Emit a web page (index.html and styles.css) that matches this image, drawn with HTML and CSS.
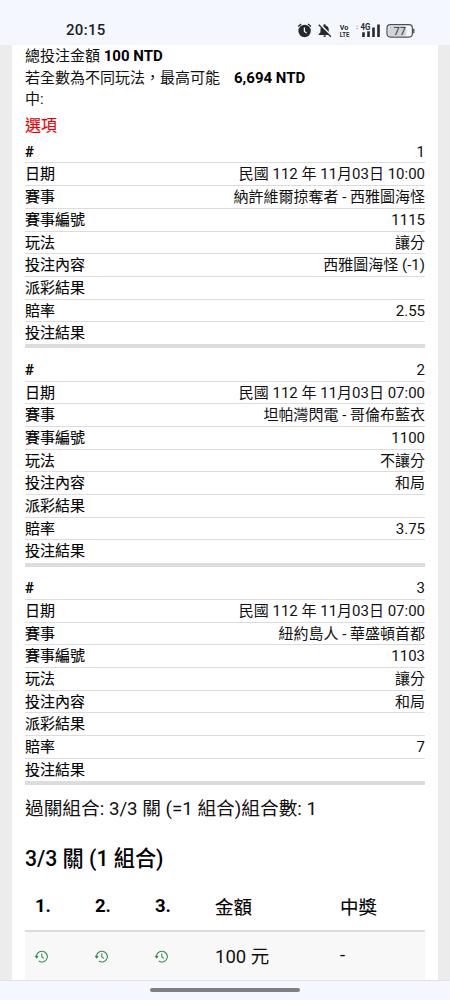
FILE: index.html
```html
<!DOCTYPE html>
<html lang="zh-Hant">
<head>
  <meta charset="UTF-8" />
  <meta name="viewport" content="width=device-width, initial-scale=1.0"/>
  <title>投注明細</title>
  <link rel="stylesheet" href="styles.css">
</head>
<body>
  <header class="status-bar">
    <span class="time">20:15</span>
    <svg class="status-icons" width="120" height="20" viewBox="0 0 120 20">
      <!-- alarm -->
      <circle cx="8.600" cy="11" r="6.200" fill="#262a2f"/>
      <path d="M2.200 6.600L5.200 4.100M15 6.600L12 4.100" stroke="#262a2f" stroke-width="1.300"/>
      <path d="M8.400 7.600V11.400L10.600 13" fill="none" stroke="#f4f8fe" stroke-width="1.200"/>
      <!-- muted bell -->
      <path d="M22.800 14.900V13.900L24.500 12.300V9Q24.700 6.200 27.700 5.500V4.200H29.500V5.500Q32.500 6.200 32.700 9V12.300L34.500 13.900V14.900ZM27.200 15.500H30.100Q29.700 17 28.600 17T27.200 15.500Z" fill="#262a2f"/>
      <path d="M23.500 4L35.700 16.200" stroke="#f4f8fe" stroke-width="2"/>
      <path d="M22.700 4.700L34.900 16.700" stroke="#262a2f" stroke-width="1.200"/>
      <!-- network -->
      <text class="tiny" x="43.800" y="10" textLength="8.500" lengthAdjust="spacingAndGlyphs">Vo</text>
      <text class="tiny" x="43.800" y="17.200" textLength="9.500" lengthAdjust="spacingAndGlyphs">LTE</text>
      <path d="M59.700 6.700L61.200 4.700L62.700 6.700ZM59.700 8L61.200 10L62.700 8Z" fill="#c5c9ce"/>
      <text class="tiny net" x="64.500" y="10.400" textLength="9.800" lengthAdjust="spacingAndGlyphs">4G</text>
      <path d="M66.200 12.300H68.800V17H66.200ZM71.200 11.200H73.800V17H71.200ZM76.200 7.500H78.800V17H76.200ZM81.200 4.500H83.800V17H81.200Z" fill="#262a2f"/>
      <!-- battery -->
      <rect x="92.300" y="6" width="18" height="10" rx="2" fill="#d2d4d7"/>
      <rect x="91" y="4.700" width="25.400" height="12.400" rx="3.500" fill="none" stroke="#4a4d51" stroke-width="1.200"/>
      <path d="M117.800 8.800V13.200" stroke="#4a4d51" stroke-width="1.300"/>
      <text class="percent" x="97.500" y="14.700">77</text>
    </svg>
  </header>

  <main class="page">
    <div class="summary">
      <div class="summary-row"><span>總投注金額 <b>100 NTD</b></span></div>
      <div class="summary-row">
        <span class="summary-label">若全數為不同玩法，最高可能中:</span>
        <b>6,694 NTD</b>
      </div>
    </div>
    <div class="options">選項</div>

    <dl class="bet">
      <div><dt class="num">#</dt><dd>1</dd></div>
      <div><dt>日期</dt><dd>民國 112 年 11月03日 10:00</dd></div>
      <div><dt>賽事</dt><dd>納許維爾掠奪者 - 西雅圖海怪</dd></div>
      <div><dt>賽事編號</dt><dd>1115</dd></div>
      <div><dt>玩法</dt><dd>讓分</dd></div>
      <div><dt>投注內容</dt><dd>西雅圖海怪 (-1)</dd></div>
      <div><dt>派彩結果</dt><dd></dd></div>
      <div><dt>賠率</dt><dd>2.55</dd></div>
      <div><dt>投注結果</dt><dd></dd></div>
    </dl>

    <dl class="bet">
      <div><dt class="num">#</dt><dd>2</dd></div>
      <div><dt>日期</dt><dd>民國 112 年 11月03日 07:00</dd></div>
      <div><dt>賽事</dt><dd>坦帕灣閃電 - 哥倫布藍衣</dd></div>
      <div><dt>賽事編號</dt><dd>1100</dd></div>
      <div><dt>玩法</dt><dd>不讓分</dd></div>
      <div><dt>投注內容</dt><dd>和局</dd></div>
      <div><dt>派彩結果</dt><dd></dd></div>
      <div><dt>賠率</dt><dd>3.75</dd></div>
      <div><dt>投注結果</dt><dd></dd></div>
    </dl>

    <dl class="bet">
      <div><dt class="num">#</dt><dd>3</dd></div>
      <div><dt>日期</dt><dd>民國 112 年 11月03日 07:00</dd></div>
      <div><dt>賽事</dt><dd>紐約島人 - 華盛頓首都</dd></div>
      <div><dt>賽事編號</dt><dd>1103</dd></div>
      <div><dt>玩法</dt><dd>讓分</dd></div>
      <div><dt>投注內容</dt><dd>和局</dd></div>
      <div><dt>派彩結果</dt><dd></dd></div>
      <div><dt>賠率</dt><dd>7</dd></div>
      <div><dt>投注結果</dt><dd></dd></div>
    </dl>

    <p class="combo">過關組合: 3/3 關 (=1 組合)組合數: 1</p>
    <h2>3/3 關 (1 組合)</h2>

    <div class="grid grid-head">
      <span class="num">1.</span><span class="num">2.</span><span class="num">3.</span><span>金額</span><span>中獎</span>
    </div>
    <div class="grid grid-row">
      <span><svg class="clock" viewBox="0 0 14 13"><use href="#history"/></svg></span>
      <span><svg class="clock" viewBox="0 0 14 13"><use href="#history"/></svg></span>
      <span><svg class="clock" viewBox="0 0 14 13"><use href="#history"/></svg></span>
      <span>100 元</span>
      <span>-</span>
    </div>
  </main>

  <footer class="nav-bar"><div class="handle"></div></footer>

  <svg class="defs" width="0" height="0">
    <symbol id="history" viewBox="0 0 14 13">
      <path d="M1.600 7.600A5.400 5.400 0 1 1 3.800 11M0.200 5.900L1.600 7.900L3.200 6.100M6.800 3.400V7L8.900 8.400" fill="none" stroke="#2f8f4e" stroke-width="1.100"/>
    </symbol>
  </svg>
</body>
</html>
```
FILE: styles.css
```css
* {
  box-sizing: border-box;
}

body {
  margin: 0;
  height: 1000px;
  display: flex;
  flex-direction: column;
  overflow: hidden;
  background: #ececec;
  color: #111;
  font-family: Roboto, "Noto Sans CJK TC", sans-serif;
  font-size: 15px;
}

b {
  font-weight: 700;
  color: #000;
}

/* phone bars */
.status-bar {
  height: 44.500px;
  flex: none;
  display: flex;
  justify-content: space-between;
  padding: 20px 35px 0 66px;
  background: #f4f8fe;
}

.time {
  font-size: 15px;
  font-weight: 500;
  line-height: 21px;
  letter-spacing: 0.3px;
  color: #1c1f23;
}

.status-icons {
  margin-right: -1px;
}

.tiny {
  font-size: 8px;
  font-weight: 700;
  fill: #262a2f;
}

.net {
  font-size: 8.500px;
}

.percent {
  font-size: 11px;
  fill: #333;
}

.nav-bar {
  height: 20px;
  flex: none;
  display: flex;
  justify-content: center;
  padding-top: 7px;
  background: #f4f8fe;
  border-top: 1px solid #dde2ea;
}

.handle {
  width: 150px;
  height: 4px;
  border-radius: 2px;
  background: #7d7f84;
}

/* slip */
.page {
  flex: 1;
  min-height: 0;
  overflow: hidden;
  margin: 0 12px;
  padding: 1.500px 13px 0;
  background: #fff;
}

.summary-row {
  display: flex;
  line-height: 21.600px;
}

.summary-label {
  width: 209px;
  padding-right: 10px;
}

.options {
  margin-top: 1px;
  height: 29px;
  line-height: 27px;
  font-size: 16px;
  color: #f00000;
  -webkit-text-stroke: 0.100px #f00000;
}

.bet {
  margin: 0 0 10.500px;
  border-bottom: 4px solid #dcdcdc;
}

.bet div {
  display: flex;
  justify-content: space-between;
  height: 22.700px;
  line-height: 22.500px;
  border-bottom: 1px solid #dcdcdc;
}

.bet div:last-child {
  height: 22.200px;
  border-bottom: 0;
}

/* medium weight for the CJK labels */
.bet dt,
.grid-head {
  color: #000;
  -webkit-text-stroke: 0.120px #000;
}

.bet dd {
  margin: 0;
}

.bet .num,
.grid .num {
  font-weight: 700;
  -webkit-text-stroke: 0;
}

.combo {
  margin: 0;
  line-height: 28px;
  font-size: 18.700px;
}

h2 {
  margin: 21px 0 0;
  font-size: 21.200px;
  line-height: 30px;
  font-weight: 500;
  color: #000;
}

.grid {
  display: grid;
  grid-template-columns: 60px 60px 60px 125px 1fr;
  align-items: center;
  font-size: 18.500px;
}

.grid span {
  padding-left: 10px;
}

.grid-head {
  height: 58px;
  padding-top: 7px;
  border-bottom: 2px solid #dcdcdc;
}

.grid-row {
  height: 50px;
  padding-bottom: 4px;
  background: #f8f8f8;
}

.clock {
  display: block;
  width: 14px;
  height: 13px;
  margin-top: 3px;
}

.defs {
  position: absolute;
}
```
